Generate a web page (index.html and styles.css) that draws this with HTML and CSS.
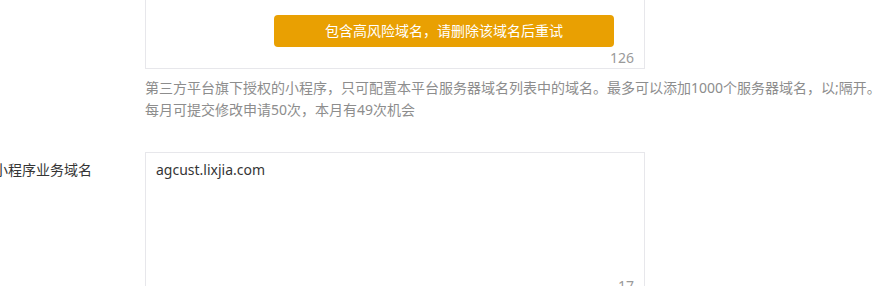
FILE: index.html
```html
<!DOCTYPE html>
<html lang="zh-CN">
<head>
<meta charset="utf-8">
<title>服务器域名</title>
<link rel="stylesheet" href="styles.css">
</head>
<body>
<div class="page">
  <div class="form">
    <div class="row">
      <div class="label"></div>
      <div class="control">
        <div class="textbox">
          <div class="text"></div>
          <div class="counter">126</div>
        </div>
        <p class="desc">第三方平台旗下授权的小程序，只可配置本平台服务器域名列表中的域名。最多可以添加1000个服务器域名，以;隔开。<br>每月可提交修改申请50次，本月有49次机会</p>
      </div>
    </div>
    <div class="row row-biz">
      <div class="label">小程序业务域名</div>
      <div class="control">
        <div class="textbox">
          <div class="text">agcust.lixjia.com</div>
          <div class="counter">17</div>
        </div>
      </div>
    </div>
  </div>
</div>
<div class="toast">包含高风险域名，请删除该域名后重试</div>
</body>
</html>
```

FILE: styles.css
```css
html, body {
  margin: 0;
  padding: 0;
  background: #ffffff;
  overflow: hidden;
}

body {
  font-family: "Noto Sans", "Noto Sans CJK SC", sans-serif;
  font-size: 14px;
  line-height: 20px;
  color: #353535;
}

.page {
  margin-top: -76px;
}

.form {
  margin-left: -6px;
  display: flex;
  flex-direction: column;
}

.row {
  display: grid;
  grid-template-columns: 151px 500px;
  align-items: start;
}

.row-biz {
  margin-top: 31px;
}

.label {
  padding-top: 8px;
  color: #353535;
  white-space: nowrap;
}

.textbox {
  box-sizing: border-box;
  height: 145px;
  border: 1px solid #e7e7eb;
  background: #fff;
  display: flex;
  flex-direction: column;
  padding: 7px 10px 0 10px;
}

.text {
  flex: 1;
  color: #353535;
}

.counter {
  align-self: flex-end;
  color: #9a9a9a;
  line-height: 20px;
}

.desc {
  margin: 8px 0 0 0;
  width: 760px;
  line-height: 22px;
  color: #8d8d8d;
  white-space: nowrap;
}

.toast {
  position: absolute;
  left: 274px;
  top: 15px;
  width: 340px;
  height: 32px;
  border-radius: 4px;
  background: #e9a002;
  color: #ffffff;
  font-size: 14px;
  line-height: 32px;
  text-align: center;
}
```
